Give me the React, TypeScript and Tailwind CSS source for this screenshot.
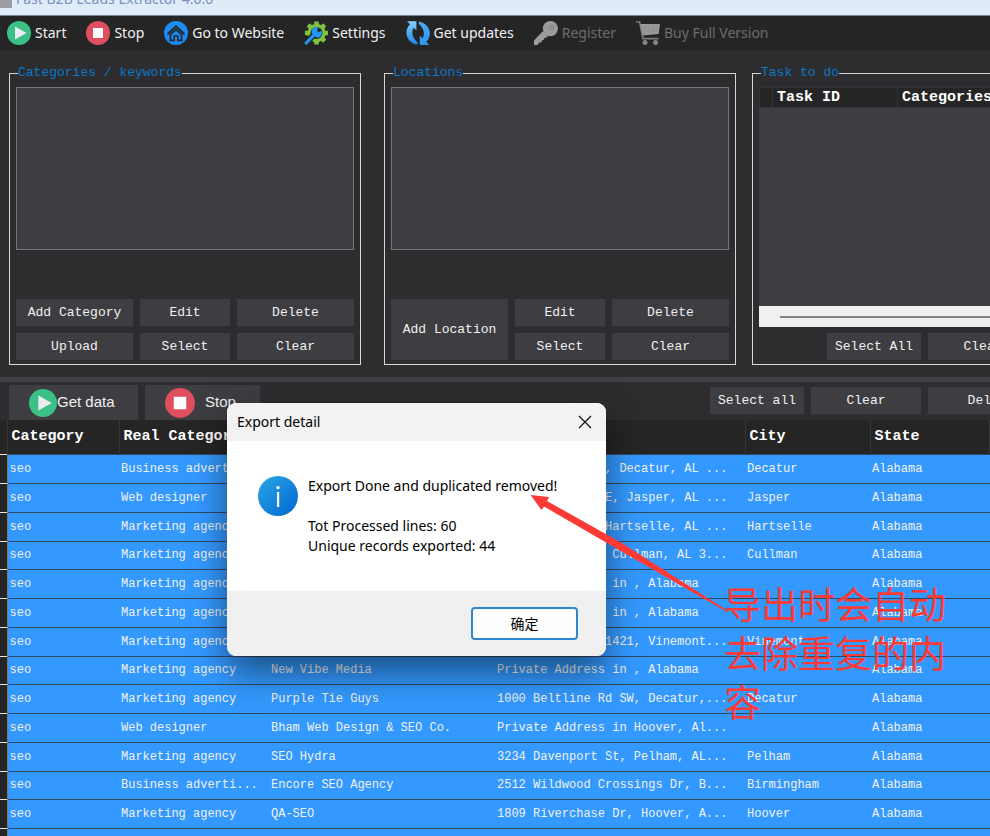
import type { ReactNode } from 'react';

type Lead = {
    category: string;
    real: string;
    name: string;
    address: string;
    city: string;
};

const leads: Lead[] = [
    { category: 'seo', real: 'Business adverti...', name: '', address: 'E, Decatur, AL ...', city: 'Decatur' },
    { category: 'seo', real: 'Web designer', name: '', address: 'E, Jasper, AL ...', city: 'Jasper' },
    { category: 'seo', real: 'Marketing agency', name: '', address: 'Hartselle, AL ...', city: 'Hartselle' },
    { category: 'seo', real: 'Marketing agency', name: '', address: 'Cullman, AL 3...', city: 'Cullman' },
    { category: 'seo', real: 'Marketing agency', name: '', address: 'Private Address in , Alabama    ', city: '' },
    { category: 'seo', real: 'Marketing agency', name: '', address: 'Private Address in , Alabama    ', city: '' },
    { category: 'seo', real: 'Marketing agency', name: '', address: '1421, Vinemont...', city: 'Vinemont' },
    { category: 'seo', real: 'Marketing agency', name: 'New Vibe Media', address: 'Private Address in , Alabama    ', city: '' },
    { category: 'seo', real: 'Marketing agency', name: 'Purple Tie Guys', address: '1000 Beltline Rd SW, Decatur,...', city: 'Decatur' },
    { category: 'seo', real: 'Web designer', name: 'Bham Web Design & SEO Co.', address: 'Private Address in Hoover, Al...', city: '' },
    { category: 'seo', real: 'Marketing agency', name: 'SEO Hydra', address: '3234 Davenport St, Pelham, AL...', city: 'Pelham' },
    { category: 'seo', real: 'Business adverti...', name: 'Encore SEO Agency', address: '2512 Wildwood Crossings Dr, B...', city: 'Birmingham' },
    { category: 'seo', real: 'Marketing agency', name: 'QA-SEO', address: '1809 Riverchase Dr, Hoover, A...', city: 'Hoover' },
    { category: 'seo', real: 'Marketing agency', name: '', address: '', city: '' },
];

function PlayIcon({ className }: { className: string }) {
    return (
        <svg viewBox="0 0 24 24" className={className} aria-hidden="true">
            <circle cx="12" cy="12" r="12" fill="#3bc185" />
            <path d="M8 5.5 L19.5 12 L8 18.5 Z" fill="#e9edf2" />
        </svg>
    );
}

function StopIcon({ className }: { className: string }) {
    return (
        <svg viewBox="0 0 24 24" className={className} aria-hidden="true">
            <circle cx="12" cy="12" r="12" fill="#e04f5f" />
            <rect x="7" y="7" width="10" height="10" fill="#fff" />
        </svg>
    );
}

function HomeIcon() {
    return (
        <svg viewBox="0 0 24 24" className="size-6" aria-hidden="true">
            <circle cx="12" cy="12" r="12" fill="#1c8cf0" />
            <path d="M3.6 13.2 L12 5.4 L20.4 13.2" fill="none" stroke="#232a33" strokeWidth="2" />
            <path d="M6.4 13.6 L12 8.5 L17.6 13.6 V19.4 H13.8 V15 H10.2 V19.4 H6.4 Z" fill="none" stroke="#232a33" strokeWidth="1.7" />
        </svg>
    );
}

function SettingsIcon() {
    const teeth = [0, 45, 90, 135, 180, 225, 270, 315];
    return (
        <svg viewBox="0 0 24 24" className="size-6" aria-hidden="true">
            <circle cx="12.5" cy="12" r="7.6" fill="none" stroke="#7fc241" strokeWidth="3.2" />
            {teeth.map((angle) => (
                <rect key={angle} x="10.2" y="0.4" width="4.6" height="3.6" rx="0.8" fill="#7fc241" transform={`rotate(${angle} 12.5 12)`} />
            ))}
            <path d="M0.6 23.4 L9.6 14.2" stroke="#252526" strokeWidth="6" />
            <path d="M2.2 22 L12 12" stroke="#2196f3" strokeWidth="3.2" strokeLinecap="round" />
            <path d="M9.6 14.2 A4.3 4.3 0 0 1 14.4 6.8 L12.9 9.4 L14.6 11.2 L17.4 9.8 A4.3 4.3 0 0 1 9.6 14.2 Z" fill="#2196f3" />
        </svg>
    );
}

function UpdatesIcon() {
    return (
        <svg viewBox="0 0 24 24" className="size-6" aria-hidden="true">
            <defs>
                <linearGradient id="arrowLeft" x1="0" y1="0" x2="0" y2="1">
                    <stop offset="0" stopColor="#86cdfb" />
                    <stop offset="1" stopColor="#1e86e8" />
                </linearGradient>
                <linearGradient id="arrowRight" x1="0" y1="0" x2="0" y2="1">
                    <stop offset="0" stopColor="#4aa9f5" />
                    <stop offset="1" stopColor="#2b96f3" />
                </linearGradient>
            </defs>
            <path d="M1 0.2 H10.4 V9.4 L7.8 6.8 C5 10.4 6 17 11.6 21.4 L11 23.6 C0.6 21.4 -3 10.4 4 3.2 Z" fill="url(#arrowLeft)" />
            <path d="M23.2 24 H13.8 V14.6 L16.4 17.2 C19.2 13.6 18.2 7.2 12.6 2.8 L13.2 0.6 C23.6 2.8 27.2 13.6 20.2 20.8 Z" fill="url(#arrowRight)" />
        </svg>
    );
}

function KeyIcon() {
    return (
        <svg viewBox="0 0 24 24" className="size-6" aria-hidden="true">
            <circle cx="16.4" cy="7.6" r="7.6" fill="#9b9b9b" />
            <path d="M9 10 L14 15.4 L12.4 16.6 L10.4 16.8 L10 18.8 L8 19.2 L7.6 21.2 L5.4 21.6 L3.6 24 H0 V19.4 Z" fill="#9b9b9b" />
            <circle cx="17.8" cy="6.4" r="2" fill="#9b9b9b" stroke="#777" strokeWidth="0.9" />
        </svg>
    );
}

function CartIcon() {
    return (
        <svg viewBox="0 0 24 24" className="size-6" aria-hidden="true">
            <path d="M0 1 H3.6 L7 17.6 H22.6" fill="none" stroke="#7d7d7d" strokeWidth="1.6" />
            <path d="M4.4 3 H24 L22.6 13 L6.6 14.6 Z" fill="#9a9a9a" />
            <path d="M8.6 3 V14 M12.6 3 V14 M16.6 3 V13.4 M20.4 3 V13.2 M5 6.6 H23.4 M5.8 10.2 H23" stroke="#909090" strokeWidth="0.7" />
            <circle cx="9" cy="21.4" r="2.5" fill="#858585" />
            <circle cx="19.6" cy="21.4" r="2.5" fill="#858585" />
        </svg>
    );
}

const toolbar: { label: string; icon: ReactNode; disabled?: boolean }[] = [
    { label: 'Start', icon: <PlayIcon className="size-6" /> },
    { label: 'Stop', icon: <StopIcon className="size-6" /> },
    { label: 'Go to Website', icon: <HomeIcon /> },
    { label: 'Settings', icon: <SettingsIcon /> },
    { label: 'Get updates', icon: <UpdatesIcon /> },
    { label: 'Register', icon: <KeyIcon />, disabled: true },
    { label: 'Buy Full Version', icon: <CartIcon />, disabled: true },
];

function FlatButton({ children, className = '' }: { children: ReactNode; className?: string }) {
    return (
        <button type="button" className={`min-h-[27px] bg-[#3e3e42] text-[13px] leading-4 text-[#f1f1f1] whitespace-nowrap ${className}`}>
            {children}
        </button>
    );
}

function GroupBox({ title, className, children }: { title: string; className: string; children: ReactNode }) {
    return (
        <fieldset className={`flex h-[300px] min-w-0 flex-col border border-[#d6d6d6] px-1.5 pb-1 ${className}`}>
            <legend className="ml-0.5 text-[13px] leading-4 text-[#0a78c8]">{title}</legend>
            {children}
        </fieldset>
    );
}

function ExportDialog() {
    return (
        <div
            role="dialog"
            aria-labelledby="export-title"
            className="absolute top-[403px] left-[227px] w-[379px] overflow-hidden rounded-[9px] bg-white font-['Noto_Sans','Noto_Sans_CJK_SC',sans-serif] text-sm leading-5 text-black shadow-[0_16px_36px_rgba(0,0,0,0.5)]"
        >
            <div className="flex h-[38px] items-center justify-between bg-[#f2f2f3] pr-3.5 pl-2.5">
                <h2 id="export-title">Export detail</h2>
                <button type="button" aria-label="Close">
                    <svg viewBox="0 0 14 14" className="size-3.5" aria-hidden="true">
                        <path d="M1 1 L13 13 M13 1 L1 13" stroke="#111" strokeWidth="1.2" />
                    </svg>
                </button>
            </div>
            <div className="flex h-[150px] gap-2.5 pt-[35px] pl-[31px]">
                <svg viewBox="0 0 40 40" className="size-10 shrink-0" aria-hidden="true">
                    <defs>
                        <linearGradient id="info" x1="0" y1="0" x2="1" y2="1">
                            <stop offset="0" stopColor="#2ba6e6" />
                            <stop offset="1" stopColor="#0067cf" />
                        </linearGradient>
                    </defs>
                    <circle cx="20" cy="20" r="20" fill="url(#info)" />
                    <circle cx="20" cy="11.6" r="1.7" fill="#fff" />
                    <rect x="19" y="16" width="2.2" height="15" fill="#fff" />
                </svg>
                <div>
                    <p>Export Done and duplicated removed!</p>
                    <p className="pt-5">Tot Processed lines: 60</p>
                    <p>Unique records exported: 44</p>
                </div>
            </div>
            <div className="flex h-[65px] items-center justify-end bg-[#f0f0f0] pr-7">
                <button type="button" className="h-[33px] w-[107px] rounded-[4px] border-2 border-[#2f87cf] bg-[#fdfdfd]">
                    确定
                </button>
            </div>
        </div>
    );
}

export default function App() {
    return (
        <div className="relative flex h-screen flex-col overflow-hidden bg-[#2d2d30] font-['Liberation_Mono','Noto_Sans_CJK_SC',monospace]">
            <header className="flex h-[15px] shrink-0 items-end gap-1 overflow-hidden bg-[#dfebf7] font-['Noto_Sans',sans-serif]">
                <div className="mb-[7px] h-2 w-3 bg-[#9a9ea3]" />
                <h1 className="pb-1.5 text-sm leading-5 text-[#7c8fc4]">Fast B2B Leads Extractor 4.0.0</h1>
            </header>

            <nav className="flex h-9 shrink-0 items-center gap-5 border-t border-[#7d8791] bg-[#252526] pb-px pl-[7px] font-['Noto_Sans',sans-serif] text-sm text-[#f1f1f1]">
                {toolbar.map((item) => (
                    <button
                        key={item.label}
                        type="button"
                        disabled={item.disabled}
                        className="flex items-center gap-1 whitespace-nowrap disabled:text-[#6d6d6d]"
                    >
                        {item.icon}
                        {item.label}
                    </button>
                ))}
            </nav>

            <section className="flex shrink-0 pt-3.5 pb-3 pl-[9px]">
                <GroupBox title="Categories / keywords" className="mr-[23px] w-[352px] shrink-0">
                    <textarea aria-label="Categories / keywords" className="mt-1.5 h-[163px] w-full resize-none border border-[#76767a] bg-[#3e3e42]" />
                    <div className="mt-auto grid grid-cols-[117fr_90fr_117fr] gap-[7px]">
                        <FlatButton>Add Category</FlatButton>
                        <FlatButton>Edit</FlatButton>
                        <FlatButton>Delete</FlatButton>
                        <FlatButton>Upload</FlatButton>
                        <FlatButton>Select</FlatButton>
                        <FlatButton>Clear</FlatButton>
                    </div>
                </GroupBox>

                <GroupBox title="Locations" className="mr-4 w-[352px] shrink-0">
                    <textarea aria-label="Locations" className="mt-1.5 h-[163px] w-full resize-none border border-[#76767a] bg-[#3e3e42]" />
                    <div className="mt-auto grid grid-cols-[117fr_90fr_117fr] gap-[7px]">
                        <FlatButton className="row-span-2">Add Location</FlatButton>
                        <FlatButton>Edit</FlatButton>
                        <FlatButton>Delete</FlatButton>
                        <FlatButton>Select</FlatButton>
                        <FlatButton>Clear</FlatButton>
                    </div>
                </GroupBox>

                <GroupBox title="Task to do" className="-mr-20 flex-1">
                    <div className="mt-1.5 h-[219px] overflow-hidden bg-[#3e3e42]">
                        <table className="w-full table-fixed border-collapse text-left text-[15px] leading-[18px] text-white">
                            <thead>
                                <tr className="h-5 bg-[#252526]">
                                    <th className="w-[13px] border border-[#333337] p-0" />
                                    <th className="w-[125px] border border-[#333337] p-0 pl-1">Task ID</th>
                                    <th className="border border-[#333337] p-0 pl-1">Categories</th>
                                </tr>
                            </thead>
                        </table>
                    </div>
                    <div className="flex h-[21px] shrink-0 items-center bg-[#f0f0f0] pl-[21px]">
                        <div className="h-0.5 flex-1 bg-[#858585]" />
                    </div>
                    <div className="mt-auto flex gap-[7px] pl-[68px]">
                        <FlatButton className="w-[94px] shrink-0">Select All</FlatButton>
                        <FlatButton className="w-[110px] shrink-0">Clear</FlatButton>
                    </div>
                </GroupBox>
            </section>

            <div className="h-[5px] shrink-0 bg-[#3f3f46]" />

            <section className="flex h-[38px] shrink-0 items-start gap-[7px] pt-[3px] pl-[9px]">
                <button type="button" className="flex h-[35px] w-[129px] shrink-0 items-center bg-[#3e3e42] pl-5 font-['Liberation_Sans',sans-serif] text-[15px] text-[#f1f1f1]">
                    <PlayIcon className="size-7" />
                    Get data
                </button>
                <button type="button" className="flex h-[35px] w-[115px] shrink-0 items-center gap-2.5 bg-[#3e3e42] pl-5 font-['Liberation_Sans',sans-serif] text-[15px] text-[#f1f1f1]">
                    <StopIcon className="size-[30px]" />
                    Stop
                </button>
                <div className="-mr-16 ml-auto flex gap-[7px] pt-0.5">
                    <FlatButton className="w-[94px]">Select all</FlatButton>
                    <FlatButton className="w-[110px]">Clear</FlatButton>
                    <FlatButton className="w-[126px]">Delete</FlatButton>
                </div>
            </section>

            <table className="w-full shrink-0 table-fixed border-collapse text-left text-xs text-[#f1f1f1]">
                <thead>
                    <tr className="h-[34px] bg-[#252526] text-[15px] whitespace-nowrap text-white [&>th]:overflow-hidden [&>th]:border-r [&>th]:border-[#37373b] [&>th]:p-0 [&>th]:pl-1">
                        <th className="w-[7px]" />
                        <th className="w-[112px]">Category</th>
                        <th className="w-[150px]">Real Category</th>
                        <th className="w-[226px]" />
                        <th className="w-[250px]" />
                        <th className="w-[125px]">City</th>
                        <th>State</th>
                    </tr>
                </thead>
                <tbody>
                    {leads.map((lead, index) => (
                        <tr
                            key={index}
                            className="h-[29px] border-t border-[#35475c] bg-[#3399ff] whitespace-pre nth-[4n]:h-[28px] [&>td]:p-0 [&>td]:pl-0.5"
                        >
                            <td className="border-t border-r border-t-[#e8e8e8] border-r-[#7a7a7a] bg-[#252526]" />
                            <td>{lead.category}</td>
                            <td>{lead.real}</td>
                            <td>{lead.name}</td>
                            <td>{lead.address.padStart(32)}</td>
                            <td>{lead.city}</td>
                            <td>Alabama</td>
                        </tr>
                    ))}
                </tbody>
            </table>

            <ExportDialog />

            <svg viewBox="0 0 200 120" className="pointer-events-none absolute top-[493px] left-[529px] h-[120px] w-[200px]" aria-hidden="true">
                <path d="M1.5 2 L20 4 L18 8 L92 49.5 L199 118 L198 119 L90 57 L15 13.5 L12.5 17 Z" fill="#fd3a36" />
            </svg>
            <p className="pointer-events-none absolute top-[579px] left-[724px] w-56 font-['Noto_Sans_CJK_SC',sans-serif] text-[37px] leading-[49px] text-[#fd3a36]">
                导出时会自动去除重复的内容
            </p>
        </div>
    );
}
